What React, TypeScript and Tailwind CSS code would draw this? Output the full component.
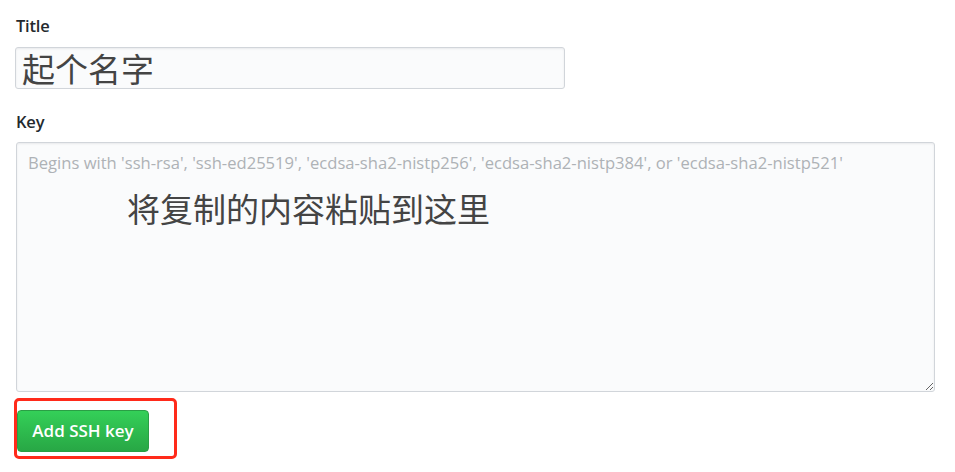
export default function App() {
  return (
    <div className="w-[955px] h-[472px] bg-white font-['Open_Sans','Noto_Sans','Noto_Sans_CJK_SC',sans-serif] text-[#24292e] overflow-hidden">
      <div className="pl-[16px] pt-[15px]">
        {/* Title */}
        <label className="block text-[16.5px] font-semibold leading-[22px] h-[22px] tracking-[-0.2px]">Title</label>
        <div className="mt-[10px] w-[550px] h-[42px] -ml-[1px] rounded-[3px] border border-[#d1d5da] bg-[#fafbfc] flex items-center pl-[6px] shadow-[inset_0_1px_2px_rgba(27,31,35,0.075)]">
          <span className="text-[33px] leading-none text-[#444] font-['Noto_Sans_CJK_SC',sans-serif]">起个名字</span>
        </div>

        {/* Key */}
        <label className="mt-[22px] block text-[16.5px] font-semibold leading-[22px] h-[22px] tracking-[-0.2px]">Key</label>
        <div className="relative mt-[9px] w-[919px] h-[250px]">
          <textarea
            readOnly
            placeholder="Begins with 'ssh-rsa', 'ssh-ed25519', 'ecdsa-sha2-nistp256', 'ecdsa-sha2-nistp384', or 'ecdsa-sha2-nistp521'"
            className="w-full h-full rounded-[3px] border border-[#d1d5da] bg-[#fafbfc] px-[11px] pt-[8px] text-[16.6px] leading-[24px] placeholder:text-[#aeb2b6] shadow-[inset_0_1px_2px_rgba(27,31,35,0.075)] outline-none font-['Open_Sans',sans-serif]"
          />
          <span className="absolute left-[111px] top-[50px] text-[33px] leading-none text-[#444] font-['Noto_Sans_CJK_SC',sans-serif] pointer-events-none">
            将复制的内容粘贴到这里
          </span>
        </div>

        {/* Button with highlight */}
        <div className="mt-[6px] -ml-[2px] w-[163px] h-[61px] border-[3px] border-[#ff2a1a] rounded-[5px] pt-[9px]">
          <button className="w-[132px] h-[42px] rounded-[4px] border border-[#2a9f45] bg-gradient-to-b from-[#34d058] to-[#28a745] text-white text-[17px] font-semibold">
            Add SSH key
          </button>
        </div>
      </div>
    </div>
  );
}
